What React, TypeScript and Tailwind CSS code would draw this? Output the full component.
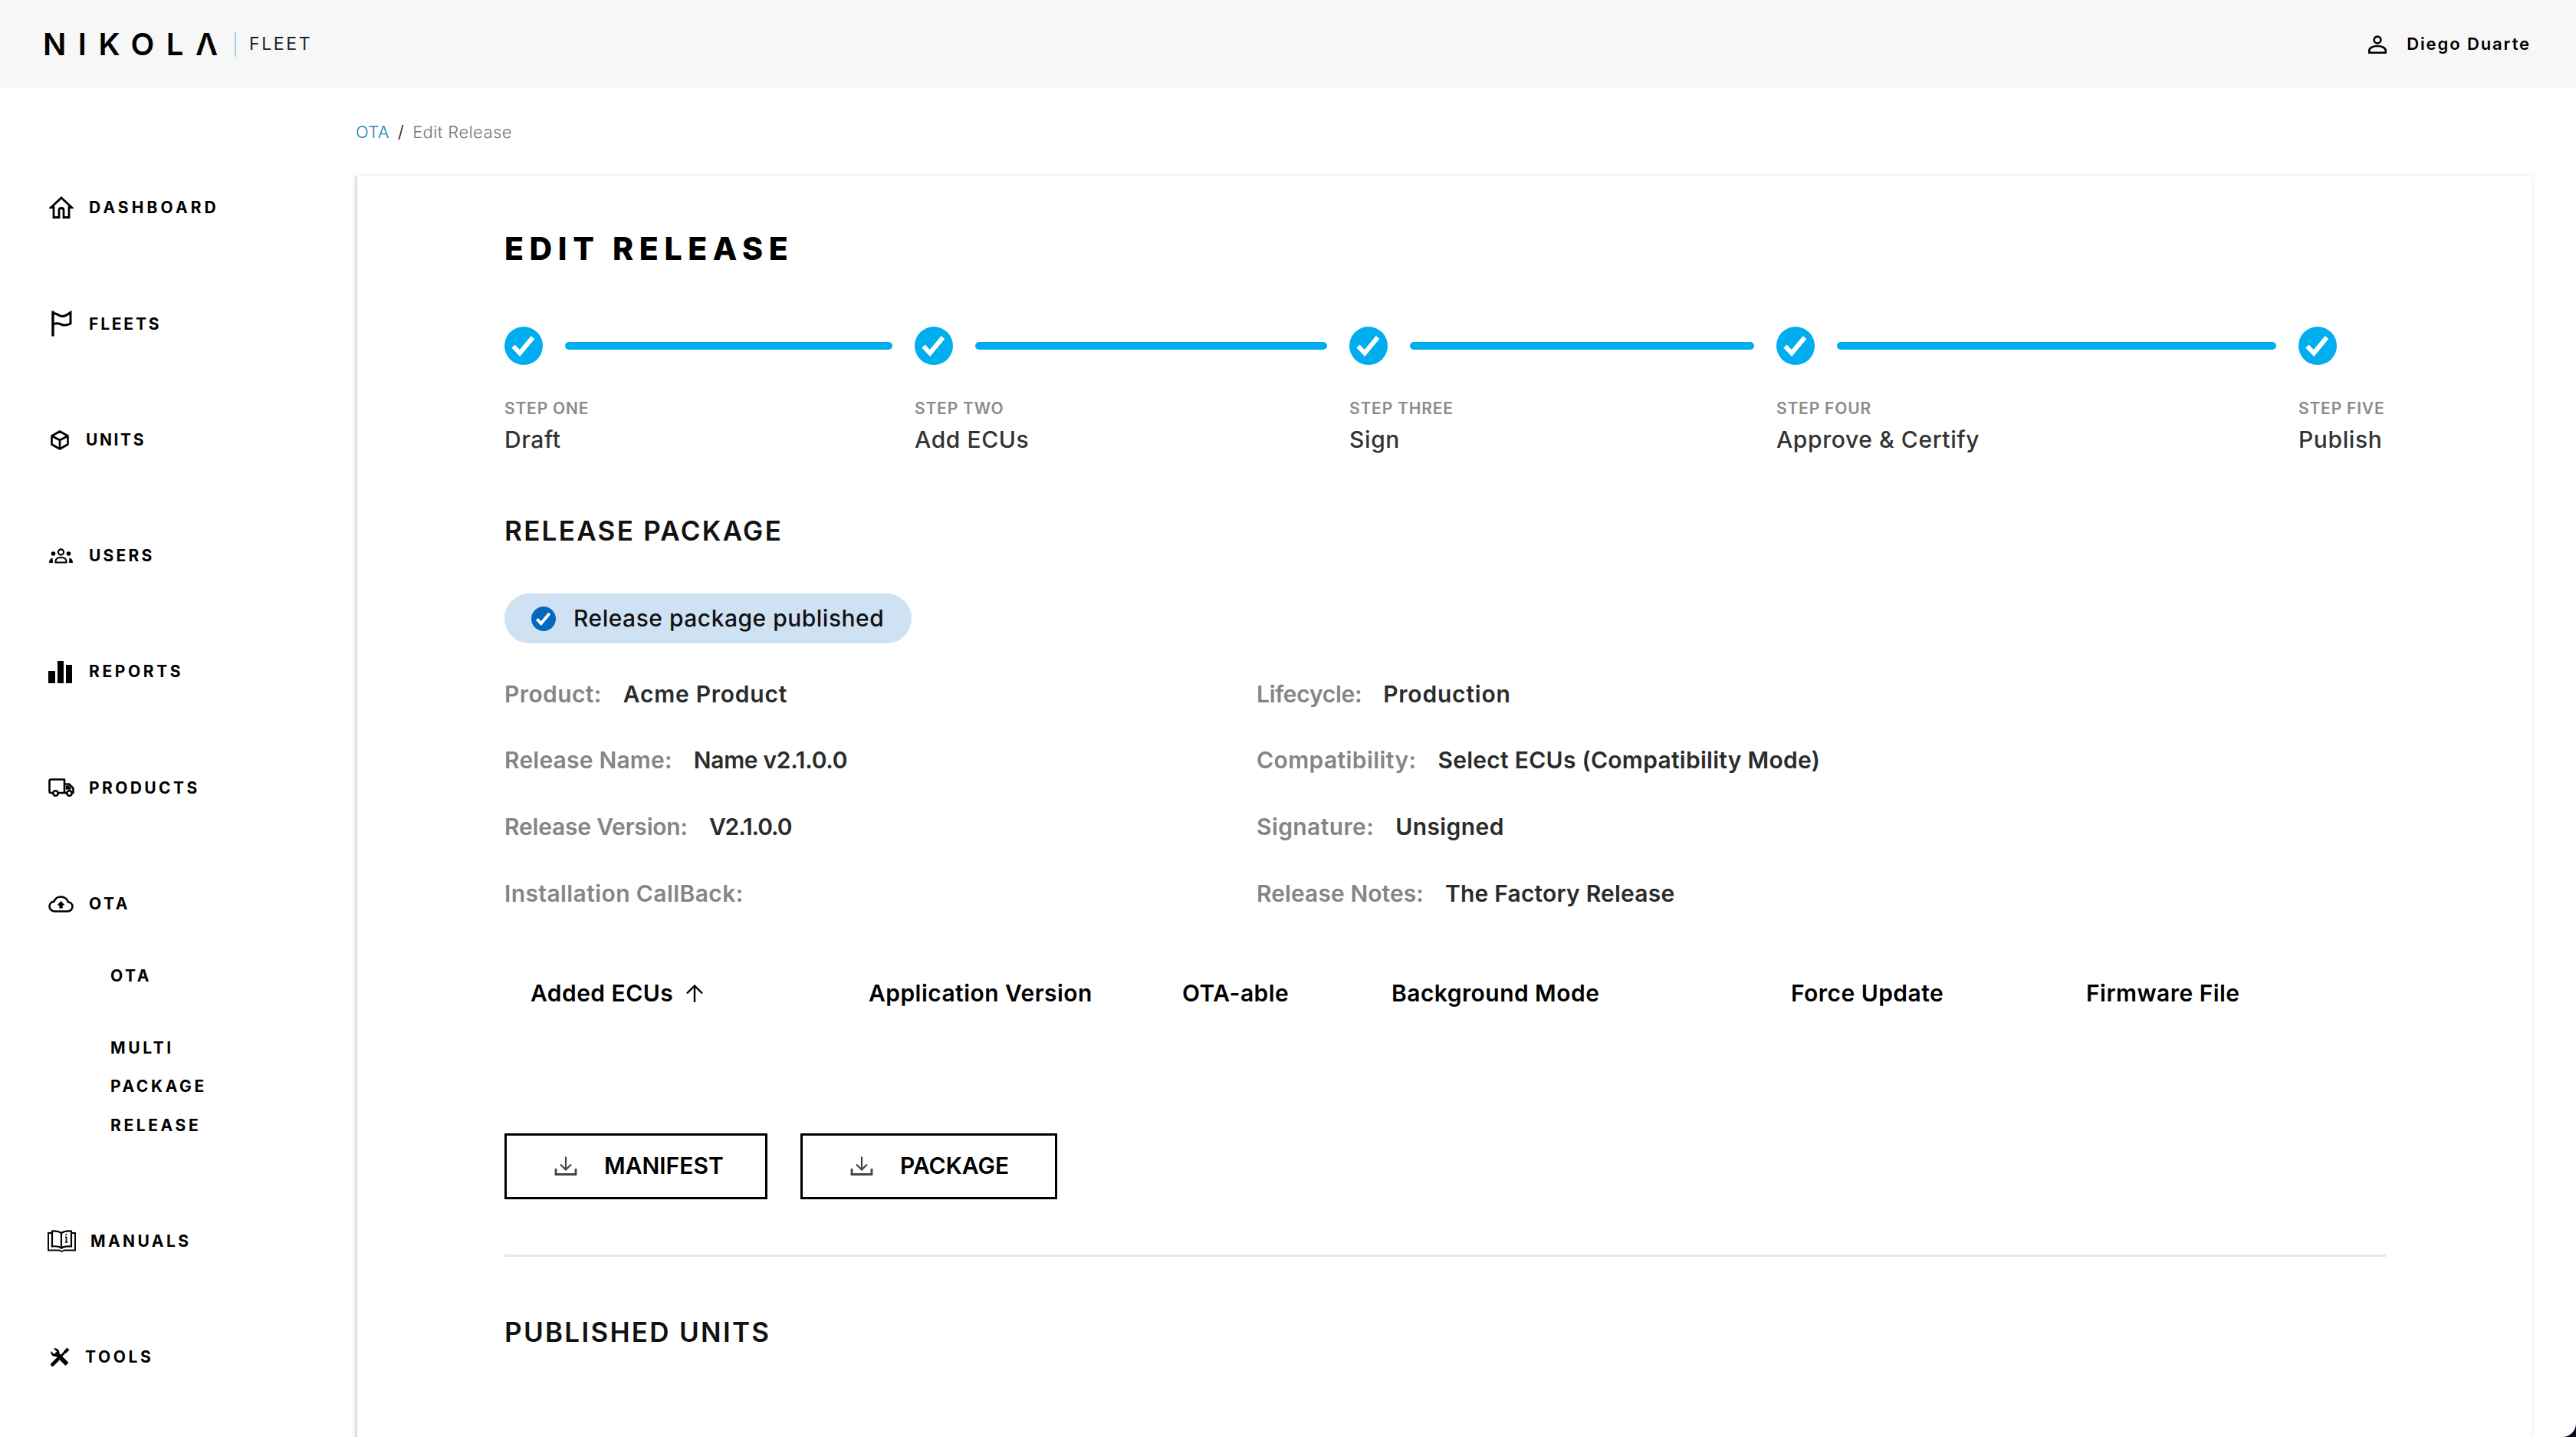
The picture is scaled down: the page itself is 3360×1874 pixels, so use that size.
import React from 'react';

const HomeIcon = () => (
  <svg width="32" height="29" viewBox="0 0 32 29" fill="none" stroke="#000" strokeWidth="2.8" strokeLinejoin="miter">
    <path d="M2.5 14.5 L16 2 L29.5 14.5 H26 V27.5 H19 V17.5 Q19 15.5 16 15.5 Q13 15.5 13 17.5 V27.5 H6 V14.5 Z" />
  </svg>
);

const FlagIcon = () => (
  <svg width="28" height="34" viewBox="0 0 28 34" fill="none" stroke="#000" strokeWidth="3">
    <path d="M3 0.5 V33.5" strokeWidth="3.4" />
    <path d="M3 3.5 C8 3 11 7.5 15 7.5 C19 7.5 22 5.5 26 2.5 V17 C22 19 19 20 15 18.5 C11 17 7 15.5 3 18.5" />
  </svg>
);

const CubeIcon = () => (
  <svg width="24" height="26" viewBox="0 0 24 26" fill="none" stroke="#000" strokeWidth="2.6" strokeLinejoin="round">
    <path d="M12 1.5 L22.5 7.5 V18.5 L12 24.5 L1.5 18.5 V7.5 Z M1.5 7.5 L12 13 L22.5 7.5 M12 13 V24.5" />
  </svg>
);

const UsersIcon = () => (
  <svg width="33" height="20" viewBox="0 0 33 20" fill="none" stroke="#000">
    <circle cx="16.5" cy="5" r="3.6" strokeWidth="2.2" />
    <circle cx="6.5" cy="7" r="2.8" fill="#000" stroke="none" />
    <circle cx="26.5" cy="7" r="2.8" fill="#000" stroke="none" />
    <path d="M9.5 18.5 V17 C9.5 13.5 13 12 16.5 12 C20 12 23.5 13.5 23.5 17 V18.5 Z" strokeWidth="2.2" />
    <path d="M1 19 C1 15.5 2.5 13 5.5 12.5 L6 19 Z" fill="#000" stroke="none" />
    <path d="M32 19 C32 15.5 30.5 13 27.5 12.5 L27 19 Z" fill="#000" stroke="none" />
  </svg>
);

const BarsIcon = () => (
  <svg width="31" height="29" viewBox="0 0 31 29" fill="#000">
    <rect x="0" y="13" width="9" height="16" />
    <rect x="12" y="0" width="8" height="29" />
    <rect x="23" y="5" width="8" height="24" />
  </svg>
);

const TruckIcon = () => (
  <svg width="34" height="24" viewBox="0 0 34 24" fill="none" stroke="#000" strokeWidth="2.6" strokeLinejoin="round">
    <path d="M5.5 19 H3.5 Q1.5 19 1.5 17 V3.5 Q1.5 1.5 3.5 1.5 H21 V19 H13" />
    <path d="M21 19 H24" />
    <path d="M21 7.5 H27 L32.5 13 V19 H31" />
    <path d="M24 10.5 H26 L28.5 13.5 H24 Z" fill="#000" />
    <circle cx="9.5" cy="19.5" r="3.2" />
    <circle cx="27.5" cy="19.5" r="3.2" />
  </svg>
);

const CloudIcon = () => (
  <svg width="33" height="22" viewBox="0 0 33 22">
    <path
      d="M8.5 20.5 C4.5 20.5 1.5 17.5 1.5 14 C1.5 10.5 4.2 8 7.5 7.6 C9 3.8 12.5 1.5 16.5 1.5 C21 1.5 24.8 4.6 25.8 8.2 C29 8.6 31.5 11 31.5 14.2 C31.5 17.8 28.5 20.5 25 20.5 Z"
      fill="none"
      stroke="#000"
      strokeWidth="2.6"
    />
    <path d="M16.5 7 L21.5 12.5 H18.7 V16.5 H14.3 V12.5 H11.5 Z" fill="#000" />
  </svg>
);

const BookIcon = () => (
  <svg width="37" height="29" viewBox="0 0 37 29" fill="none" stroke="#000" strokeWidth="1.9">
    <path d="M6 4 H1 V26.5 H15 L18.5 28 L22 26.5 H36 V4 H31" />
    <path d="M6 1.5 C10 1 15 2 18 4 V23.5 C15 21.5 10 21 6 21.5 Z" strokeWidth="2.2" />
    <path d="M18 4 C21 2 26 1 31 1.5 V21.5 C26 21 21 21.5 18 23.5" strokeWidth="2.2" />
    <path d="M24.5 9 V16 M22.8 16 H26.2 M23 9.2 H24.5" strokeWidth="1.7" />
    <circle cx="24.5" cy="6" r="1.1" fill="#000" stroke="none" />
  </svg>
);

const ToolsIcon = () => (
  <svg width="26" height="26" viewBox="0 0 26 26" fill="#000" stroke="#000">
    <path d="M1.5 5 L5.5 9 L9 5.5 L5 1.5 C9 0.5 13 3.5 12.5 8 L24.5 20 L20.5 24 L8 12 C4 12.5 0.5 9 1.5 5 Z" stroke="none" />
    <path d="M3.5 22.5 L10 16" strokeWidth="4.6" strokeLinecap="round" />
    <path d="M13 13 L20 6" strokeWidth="3" />
    <path d="M19.5 6.5 L24 2" strokeWidth="4" />
  </svg>
);

const UserIcon = () => (
  <svg width="24" height="24" viewBox="0 0 24 24" fill="none" stroke="#000" strokeWidth="2.6">
    <circle cx="12" cy="6" r="4.4" />
    <path d="M1.3 22.7 V20 C1.3 16 7 14 12 14 C17 14 22.7 16 22.7 20 V22.7 Z" />
  </svg>
);

const DownloadIcon = () => (
  <svg width="30" height="25" viewBox="0 0 30 25" fill="none" stroke="#444" strokeWidth="2.2">
    <path d="M15 0.5 V17 M8 10.5 L15 17.5 L22 10.5" />
    <path d="M2 16 V23.5 H28 V16" strokeWidth="2.8" />
  </svg>
);

const CheckBadge = ({ fill, className }: { fill: string; className: string }) => (
  <svg className={className} viewBox="0 0 50 50">
    <circle cx="25" cy="25" r="25" fill={fill} />
    <path d="M11.5 25.5 L20 34.5 L37 14" fill="none" stroke="#fff" strokeWidth="6" />
  </svg>
);

const navItems = [
  { label: 'DASHBOARD', icon: <HomeIcon />, slot: 'w-[54px] pl-[2px] -mt-[2px]', track: 'tracking-[4.1px]' },
  { label: 'FLEETS', icon: <FlagIcon />, slot: 'w-[54px] pl-[4px]', track: 'tracking-[2.8px]' },
  { label: 'UNITS', icon: <CubeIcon />, slot: 'w-[50px] pl-[4px]', track: 'tracking-[2.6px]' },
  { label: 'USERS', icon: <UsersIcon />, slot: 'w-[54px] pl-[1px]', track: 'tracking-[3.2px]' },
  { label: 'REPORTS', icon: <BarsIcon />, slot: 'w-[54px] pl-[1px]', track: 'tracking-[3.6px]' },
  { label: 'PRODUCTS', icon: <TruckIcon />, slot: 'w-[54px] pl-[1px]', track: 'tracking-[3.4px]' },
];

const steps = [
  { step: 'STEP ONE', name: 'Draft', col: 'w-[535px]', line: true },
  { step: 'STEP TWO', name: 'Add ECUs', col: 'w-[567px]', line: true },
  { step: 'STEP THREE', name: 'Sign', col: 'w-[557px]', line: true },
  { step: 'STEP FOUR', name: 'Approve & Certify', col: 'w-[681px]', line: true },
  { step: 'STEP FIVE', name: 'Publish', col: 'w-[114px]', line: false },
];

// tracking per string, the fallback font runs a little different from the original
const leftDetails = [
  { label: 'Product:', value: 'Acme Product', lt: 'tracking-[0.4px]', vt: 'tracking-[0.75px]' },
  { label: 'Release Name:', value: 'Name v2.1.0.0', lt: 'tracking-[0.2px]', vt: 'tracking-[-0.3px]' },
  { label: 'Release Version:', value: 'V2.1.0.0', lt: 'tracking-[-0.2px]', vt: 'tracking-[-1.1px]' },
  { label: 'Installation CallBack:', value: '', lt: 'tracking-[0.4px]', vt: '' },
];

const rightDetails = [
  { label: 'Lifecycle:', value: 'Production', lt: 'tracking-[-0.3px]', vt: 'tracking-[0.8px]' },
  { label: 'Compatibility:', value: 'Select ECUs (Compatibility Mode)', lt: 'tracking-[0.4px]', vt: 'tracking-[0.27px]' },
  { label: 'Signature:', value: 'Unsigned', lt: 'tracking-[0.4px]', vt: 'tracking-[0.4px]' },
  { label: 'Release Notes:', value: 'The Factory Release', lt: 'tracking-[0.07px]', vt: 'tracking-[0.2px]' },
];

const NavLabel = ({ children, track = 'tracking-[3.6px]' }: { children: React.ReactNode; track?: string }) => (
  <span className={`text-[21px] font-bold text-black ${track}`}>{children}</span>
);

const NavRow = ({ label, icon, slot, track }: { label: string; icon: React.ReactNode; slot: string; track?: string }) => (
  <div className="flex h-[50px] items-center">
    <div className={`flex items-center ${slot}`}>{icon}</div>
    <NavLabel track={track}>{label}</NavLabel>
  </div>
);

const DetailRow = ({ label, value, lt, vt }: { label: string; value: string; lt: string; vt: string }) => (
  <div className="flex h-[86.67px] items-center gap-[28px] text-[30px] font-semibold">
    <span className={`text-[#858585] ${lt}`}>{label}</span>
    {value && <span className={`text-[#2b2b2b] ${vt}`}>{value}</span>}
  </div>
);

const OutlineButton = ({ label, width }: { label: string; width: string }) => (
  <button className={`flex h-[86px] items-center gap-[35px] border-[3px] border-black pl-[62px] ${width}`}>
    <DownloadIcon />
    <span className="text-[30px] font-semibold text-black">{label}</span>
  </button>
);

export default function App() {
  return (
    <div className="h-[1874px] overflow-hidden bg-[#0b0a20] font-['Inter',sans-serif]">
      <div className="h-full overflow-hidden rounded-br-[18px] bg-white">
        {/* Header */}
        <header className="flex h-[115px] items-center justify-between bg-[#f7f7f7] pl-[56px] pr-[59px]">
          <div className="flex items-center">
            <span className="w-[250px] text-[40px] font-semibold leading-none tracking-[15.5px] text-black">NIKOLΛ</span>
            <span className="h-[32px] w-[2px] bg-[#9dd5ee]" />
            <span className="ml-[17px] text-[23px] font-normal leading-none tracking-[2.6px] text-[#222]">FLEET</span>
          </div>
          <div className="flex items-center gap-[26px]">
            <UserIcon />
            <span className="text-[22px] font-semibold tracking-[1.9px] text-black">Diego Duarte</span>
          </div>
        </header>

        <div className="flex">
          {/* Sidebar */}
          <aside className="w-[463px] shrink-0 pl-[62px] pt-[131px]">
            <nav className="flex flex-col gap-[101.3px]">
              {navItems.map((item) => (
                <NavRow key={item.label} {...item} />
              ))}
              <div className="flex flex-col">
                <NavRow label="OTA" icon={<CloudIcon />} slot="w-[54px] pl-[1px]" />
                <div className="mt-[44px] flex h-[50px] items-center pl-[82px]">
                  <NavLabel>OTA</NavLabel>
                </div>
                <div className="mb-[-1px] mt-[44px] flex flex-col pl-[82px] leading-[50.5px]">
                  <NavLabel>MULTI</NavLabel>
                  <NavLabel>PACKAGE</NavLabel>
                  <NavLabel>RELEASE</NavLabel>
                </div>
              </div>
              <NavRow label="MANUALS" icon={<BookIcon />} slot="w-[56px]" track="tracking-[3.4px]" />
              <NavRow label="TOOLS" icon={<ToolsIcon />} slot="w-[49px] pl-[3px]" />
            </nav>
          </aside>

          <main className="w-[2839px]">
            {/* Breadcrumb */}
            <div className="flex h-[115px] items-center gap-[11px] pl-[1px] text-[22px] font-light tracking-[0.4px]">
              <span className="text-[#1a87b5]">OTA</span>
              <span className="text-black">/</span>
              <span className="text-[#757575]">Edit Release</span>
            </div>

            {/* Card */}
            <section className="h-[1700px] border-l-[3px] border-l-[#e0e0e0] bg-white pl-[192px] pr-[190px] pt-[74px] shadow-[0_0_7px_rgba(0,0,0,0.1)]">
              <h1 className="h-[40px] text-[41px] font-extrabold leading-[40px] tracking-[7.6px] text-black">EDIT RELEASE</h1>

              {/* Stepper */}
              <div className="mt-[82px] flex">
                {steps.map((s) => (
                  <div key={s.step} className={`shrink-0 ${s.col}`}>
                    <div className="flex h-[50px] items-center">
                      <CheckBadge fill="#00aeef" className="h-[50px] w-[50px] shrink-0" />
                      {s.line && <div className="mx-[29px] h-[10px] flex-1 rounded-full bg-[#00aeef]" />}
                    </div>
                    <div className="mt-[47px] h-[20px] whitespace-nowrap text-[21px] font-semibold leading-[20px] tracking-[0.8px] text-[#8c8c8c]">{s.step}</div>
                    <div className="mt-[15px] h-[30px] whitespace-nowrap text-[30px] font-medium leading-[30px] tracking-[0.6px] text-[#333]">{s.name}</div>
                  </div>
                ))}
              </div>

              <h2 className="mt-[86px] h-[36px] text-[35px] font-semibold leading-[36px] tracking-[2.3px] text-[#111]">RELEASE PACKAGE</h2>

              <div className="mt-[64px] flex h-[65px] w-[531px] items-center gap-[23px] rounded-full bg-[#cee2f4] pl-[35px]">
                <CheckBadge fill="#0469bd" className="h-[32px] w-[32px] shrink-0" />
                <span className="text-[30px] font-medium tracking-[0.5px] text-[#111]">Release package published</span>
              </div>

              {/* Details */}
              <div className="mt-[23px] grid grid-cols-[981px_1fr]">
                <div>
                  {leftDetails.map((row) => (
                    <DetailRow key={row.label} {...row} />
                  ))}
                </div>
                <div>
                  {rightDetails.map((row) => (
                    <DetailRow key={row.label} {...row} />
                  ))}
                </div>
              </div>

              {/* ECU table head */}
              <div className="mt-[57px] flex h-[60px] items-center pl-[34px] text-[30px] font-semibold tracking-[0.45px] text-black">
                <div className="flex w-[441px] items-center gap-[17px]">
                  <span>Added ECUs</span>
                  <svg width="22" height="23" viewBox="0 0 22 23" fill="none" stroke="#000" strokeWidth="2.4">
                    <path d="M11 23 V1.5 M1 11.5 L11 1.5 L21 11.5" />
                  </svg>
                </div>
                <div className="w-[409px]">Application Version</div>
                <div className="w-[273px]">OTA-able</div>
                <div className="w-[521px]">Background Mode</div>
                <div className="w-[385px]">Force Update</div>
                <div>Firmware File</div>
              </div>

              <div className="mt-[152px] flex gap-[43px]">
                <OutlineButton label="MANIFEST" width="w-[343px]" />
                <OutlineButton label="PACKAGE" width="w-[335px]" />
              </div>

              <div className="mt-[72px] h-[3px] bg-[#e6e6ea]" />

              <h2 className="mt-[80px] h-[36px] text-[35px] font-semibold leading-[36px] tracking-[2.3px] text-[#111]">PUBLISHED UNITS</h2>
            </section>
          </main>
        </div>
      </div>
    </div>
  );
}
